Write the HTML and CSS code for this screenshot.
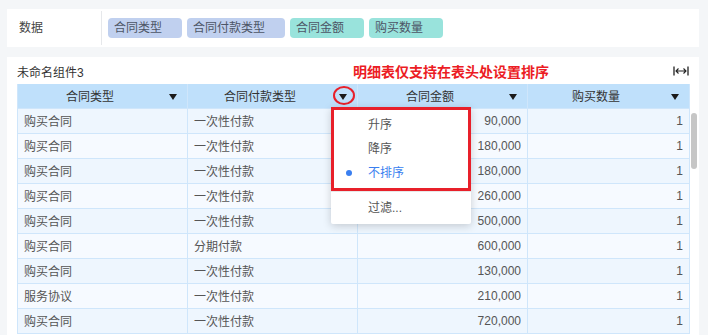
FILE: index.html
```html
<!DOCTYPE html>
<html lang="zh-CN">

<head>
    <meta charset="UTF-8" />
    <title>明细表排序</title>
    <link rel="stylesheet" href="styles.css">
</head>

<body>
    <div class="data-bar">
        <div class="data-label">数据</div>
        <div class="tags">
            <span class="tag dim">合同类型</span>
            <span class="tag dim">合同付款类型</span>
            <span class="tag measure">合同金额</span>
            <span class="tag measure">购买数量</span>
        </div>
    </div>

    <div class="widget">
        <div class="widget-head">
            <span class="widget-title">未命名组件3</span>
            <svg class="fit-icon" width="16" height="10" viewBox="0 0 16 10">
                <path d="M1 0.5v9M15 0.5v9" stroke="#222" stroke-width="1.3" fill="none" />
                <path d="M3 5h10M5.5 2.5L3 5l2.5 2.5M10.5 2.5L13 5l-2.5 2.5" stroke="#222" stroke-width="1.1" fill="none" />
            </svg>
        </div>
        <span class="note">明细表仅支持在表头处设置排序</span>

        <table class="grid">
            <colgroup>
                <col style="width:170px">
                <col style="width:170px">
                <col style="width:170px">
                <col style="width:162px">
            </colgroup>
            <thead>
                <tr>
                    <th>合同类型<i class="caret"></i></th>
                    <th>合同付款类型<i class="caret"></i></th>
                    <th>合同金额<i class="caret"></i></th>
                    <th>购买数量<i class="caret"></i></th>
                </tr>
            </thead>
            <tbody>
                <tr><td>购买合同</td><td>一次性付款</td><td class="num">90,000</td><td class="num">1</td></tr>
                <tr><td>购买合同</td><td>一次性付款</td><td class="num">180,000</td><td class="num">1</td></tr>
                <tr><td>购买合同</td><td>一次性付款</td><td class="num">180,000</td><td class="num">1</td></tr>
                <tr><td>购买合同</td><td>一次性付款</td><td class="num">260,000</td><td class="num">1</td></tr>
                <tr><td>购买合同</td><td>一次性付款</td><td class="num">500,000</td><td class="num">1</td></tr>
                <tr><td>购买合同</td><td>分期付款</td><td class="num">600,000</td><td class="num">1</td></tr>
                <tr><td>购买合同</td><td>一次性付款</td><td class="num">130,000</td><td class="num">1</td></tr>
                <tr><td>服务协议</td><td>一次性付款</td><td class="num">210,000</td><td class="num">1</td></tr>
                <tr><td>购买合同</td><td>一次性付款</td><td class="num">720,000</td><td class="num">1</td></tr>
            </tbody>
        </table>

        <div class="scroll-thumb"></div>
        <div class="mark-circle"></div>

        <div class="sort-menu">
            <div class="menu-item">升序</div>
            <div class="menu-item">降序</div>
            <div class="menu-item active">不排序</div>
            <div class="menu-sep"></div>
            <div class="menu-item">过滤...</div>
            <div class="mark-box"></div>
        </div>
    </div>
</body>

</html>
```

FILE: styles.css
```css
* {
    margin: 0;
    padding: 0;
    box-sizing: border-box;
}

body {
    background-color: #f4f6f8;
    font-family: "Liberation Sans", "Noto Sans CJK SC", sans-serif;
    font-size: 12px;
    color: #555;
    padding: 9px 9px 0 7px;
    height: 335px;
    overflow: hidden;
}

.data-bar {
    background-color: #fff;
    height: 38px;
    display: flex;
    align-items: center;
}

.data-label {
    width: 95px;
    height: 34px;
    line-height: 34px;
    padding-left: 12px;
    color: #444;
    border-right: 1px solid #e6e8eb;
}

.tags {
    display: flex;
    gap: 5px;
    padding-left: 6px;
}

.tag {
    height: 20px;
    line-height: 20px;
    padding: 0 20px 0 6px;
    border-radius: 4px;
    color: #4d5566;
}

.tag.dim {
    background-color: #c0d0ef;
}

.tag.measure {
    background-color: #99e3dc;
}

.widget {
    position: relative;
    background-color: #fff;
    margin-top: 10px;
    height: 278px;
    padding: 0 10px;
    overflow: hidden;
}

.widget-head {
    height: 27px;
    display: flex;
    align-items: center;
    justify-content: space-between;
    padding-top: 1px;
}

.widget-title {
    color: #333;
}

.note {
    position: absolute;
    left: 346px;
    top: 4px;
    font-size: 14px;
    font-weight: bold;
    color: #ec1c24;
}

.grid {
    width: 672px;
    border-collapse: collapse;
    table-layout: fixed;
}

.grid th,
.grid td {
    border: 1px solid #cfe6fb;
    white-space: nowrap;
}

.grid th {
    position: relative;
    height: 24px;
    background-color: #bfe0fb;
    font-weight: normal;
    color: #333;
    padding-right: 25px;
    border-top: none;
}

.caret {
    position: absolute;
    right: 10px;
    top: 10px;
    border-left: 4.5px solid transparent;
    border-right: 4.5px solid transparent;
    border-top: 6px solid #1a1a1a;
}

.grid td {
    height: 25px;
    padding: 0 6px;
    background-color: #f6faff;
}

.grid tbody tr:nth-child(odd) td {
    background-color: #eef6fe;
}

.grid td.num {
    text-align: right;
}

.scroll-thumb {
    position: absolute;
    left: 684px;
    top: 56px;
    width: 6px;
    height: 56px;
    border-radius: 3px;
    background-color: #c6c6c6;
}

.mark-circle {
    position: absolute;
    left: 326px;
    top: 29px;
    width: 22px;
    height: 19px;
    border: 2.5px solid #e8202a;
    border-radius: 50%;
}

.sort-menu {
    position: absolute;
    left: 324px;
    top: 50px;
    width: 140px;
    padding: 6px 0 4px;
    background-color: #fff;
    border-radius: 2px;
    box-shadow: 0 2px 8px rgba(0, 0, 0, 0.18);
}

.menu-item {
    position: relative;
    height: 24px;
    line-height: 24px;
    padding-left: 37px;
    color: #555;
}

.menu-item.active {
    color: #3a7ff0;
}

.menu-item.active::before {
    content: "";
    position: absolute;
    left: 15px;
    top: 9px;
    width: 6px;
    height: 6px;
    border-radius: 50%;
    background-color: #3a7ff0;
}

.menu-sep {
    height: 1px;
    margin: 6px 0 4px;
    background-color: #e8e8e8;
}

.mark-box {
    position: absolute;
    left: 0;
    top: 0;
    width: 140px;
    height: 84px;
    border: 3px solid #e8202a;
}
```
